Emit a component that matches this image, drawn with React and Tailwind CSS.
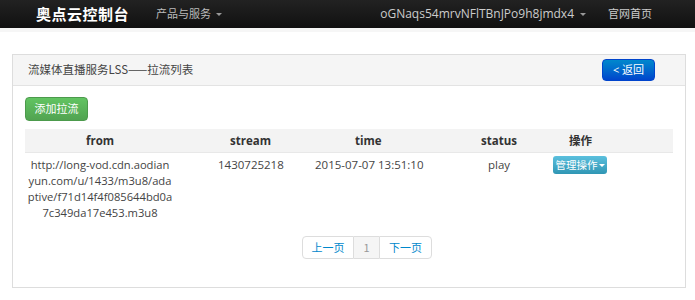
import React from "react";

export default function App() {
  return (
    <div className="w-[695px] h-[300px] bg-white overflow-hidden text-[#333] font-['Open_Sans','Noto_Sans_CJK_SC',sans-serif]">
      {/* navbar */}
      <div className="h-[28px] bg-gradient-to-b from-[#222] to-[#111] flex items-center">
        <div className="ml-[36px] text-white font-bold text-[15px] tracking-[0.5px] font-['Noto_Sans_CJK_SC',sans-serif]">奥点云控制台</div>
        <div className="ml-[27px] text-[#bbb] text-[11px] flex items-center">
          产品与服务
          <span className="ml-[5px] inline-block w-0 h-0 border-l-[3px] border-r-[3px] border-t-[3px] border-l-transparent border-r-transparent border-t-[#999]"></span>
        </div>
        <div className="ml-auto text-[#ccc] text-[12px] flex items-center">
          oGNaqs54mrvNFlTBnJPo9h8jmdx4
          <span className="ml-[6px] inline-block w-0 h-0 border-l-[3px] border-r-[3px] border-t-[3px] border-l-transparent border-r-transparent border-t-[#999]"></span>
        </div>
        <div className="ml-[22px] mr-[43px] text-[#ccc] text-[11px]">官网首页</div>
      </div>
      <div className="h-[4px] bg-[#f6f6f6]"></div>

      {/* panel */}
      <div className="mt-[22px] ml-[12px] w-[674px] h-[234px] border border-[#ddd] flex flex-col">
        <div className="h-[31px] bg-[#f5f5f5] border-b border-[#e3e3e3] flex items-center justify-between pl-[15px] pr-[30px] shrink-0">
          <div className="text-[11.5px] text-[#444] font-['Noto_Sans_CJK_SC',sans-serif]">流媒体直播服务LSS——拉流列表</div>
          <div className="w-[53px] h-[22px] rounded-[4px] bg-gradient-to-b from-[#0088cc] to-[#0044cc] border border-[#0044cc] text-white text-[11px] flex items-center justify-center">
            &lt; 返回
          </div>
        </div>
        <div className="pl-[12px] pt-[11px]">
          <div className="w-[63px] h-[24px] rounded-[4px] bg-gradient-to-b from-[#62c462] to-[#51a351] border border-[#4c9a4c] text-white text-[11px] flex items-center justify-center">
            添加拉流
          </div>
          <div className="mt-[8px] w-[648px]">
            <div className="h-[23px] bg-[#f3f3f3] flex items-center font-bold text-[11.5px] text-[#333]">
              <div className="w-[150px] text-center">from</div>
              <div className="w-[180px] pl-[55px]">stream</div>
              <div className="w-[126px]">time</div>
              <div className="w-[88px]">status</div>
              <div className="font-['Noto_Sans_CJK_SC',sans-serif]">操作</div>
            </div>
            <div className="h-[70px] border-t border-[#e8e8e8] flex items-start pt-[4px] text-[11.5px] leading-[16px] text-[#444]">
              <div className="w-[150px] text-center whitespace-nowrap text-[11.2px]">
                http://long-vod.cdn.aodian<br />yun.com/u/1433/m3u8/ada<br />ptive/f71d14f4f085644bd0a<br />7c349da17e453.m3u8
              </div>
              <div className="w-[140px] pl-[43px]">1430725218</div>
              <div className="w-[173px]">2015-07-07 13:51:10</div>
              <div className="w-[65px]">play</div>
              <div className="w-[54px] h-[18px] -mt-[1px] rounded-[3px] bg-gradient-to-b from-[#5bc0de] to-[#2f96b4] text-white text-[10.5px] flex items-center justify-center font-['Noto_Sans_CJK_SC',sans-serif]">
                管理操作
                <span className="ml-[1px] inline-block w-0 h-0 border-l-[3px] border-r-[3px] border-t-[3px] border-l-transparent border-r-transparent border-t-white"></span>
              </div>
            </div>
            <div className="mt-[14px] ml-[277px] flex h-[23px] text-[11px] font-['Noto_Sans_CJK_SC',sans-serif]">
              <div className="w-[52px] border border-[#ddd] rounded-l-[4px] flex items-center justify-center text-[#0088cc]">上一页</div>
              <div className="w-[25px] border-y border-[#ddd] bg-[#f5f5f5] flex items-center justify-center text-[#999]">1</div>
              <div className="w-[53px] border border-[#ddd] rounded-r-[4px] flex items-center justify-center text-[#0088cc]">下一页</div>
            </div>
          </div>
        </div>
      </div>
    </div>
  );
}
